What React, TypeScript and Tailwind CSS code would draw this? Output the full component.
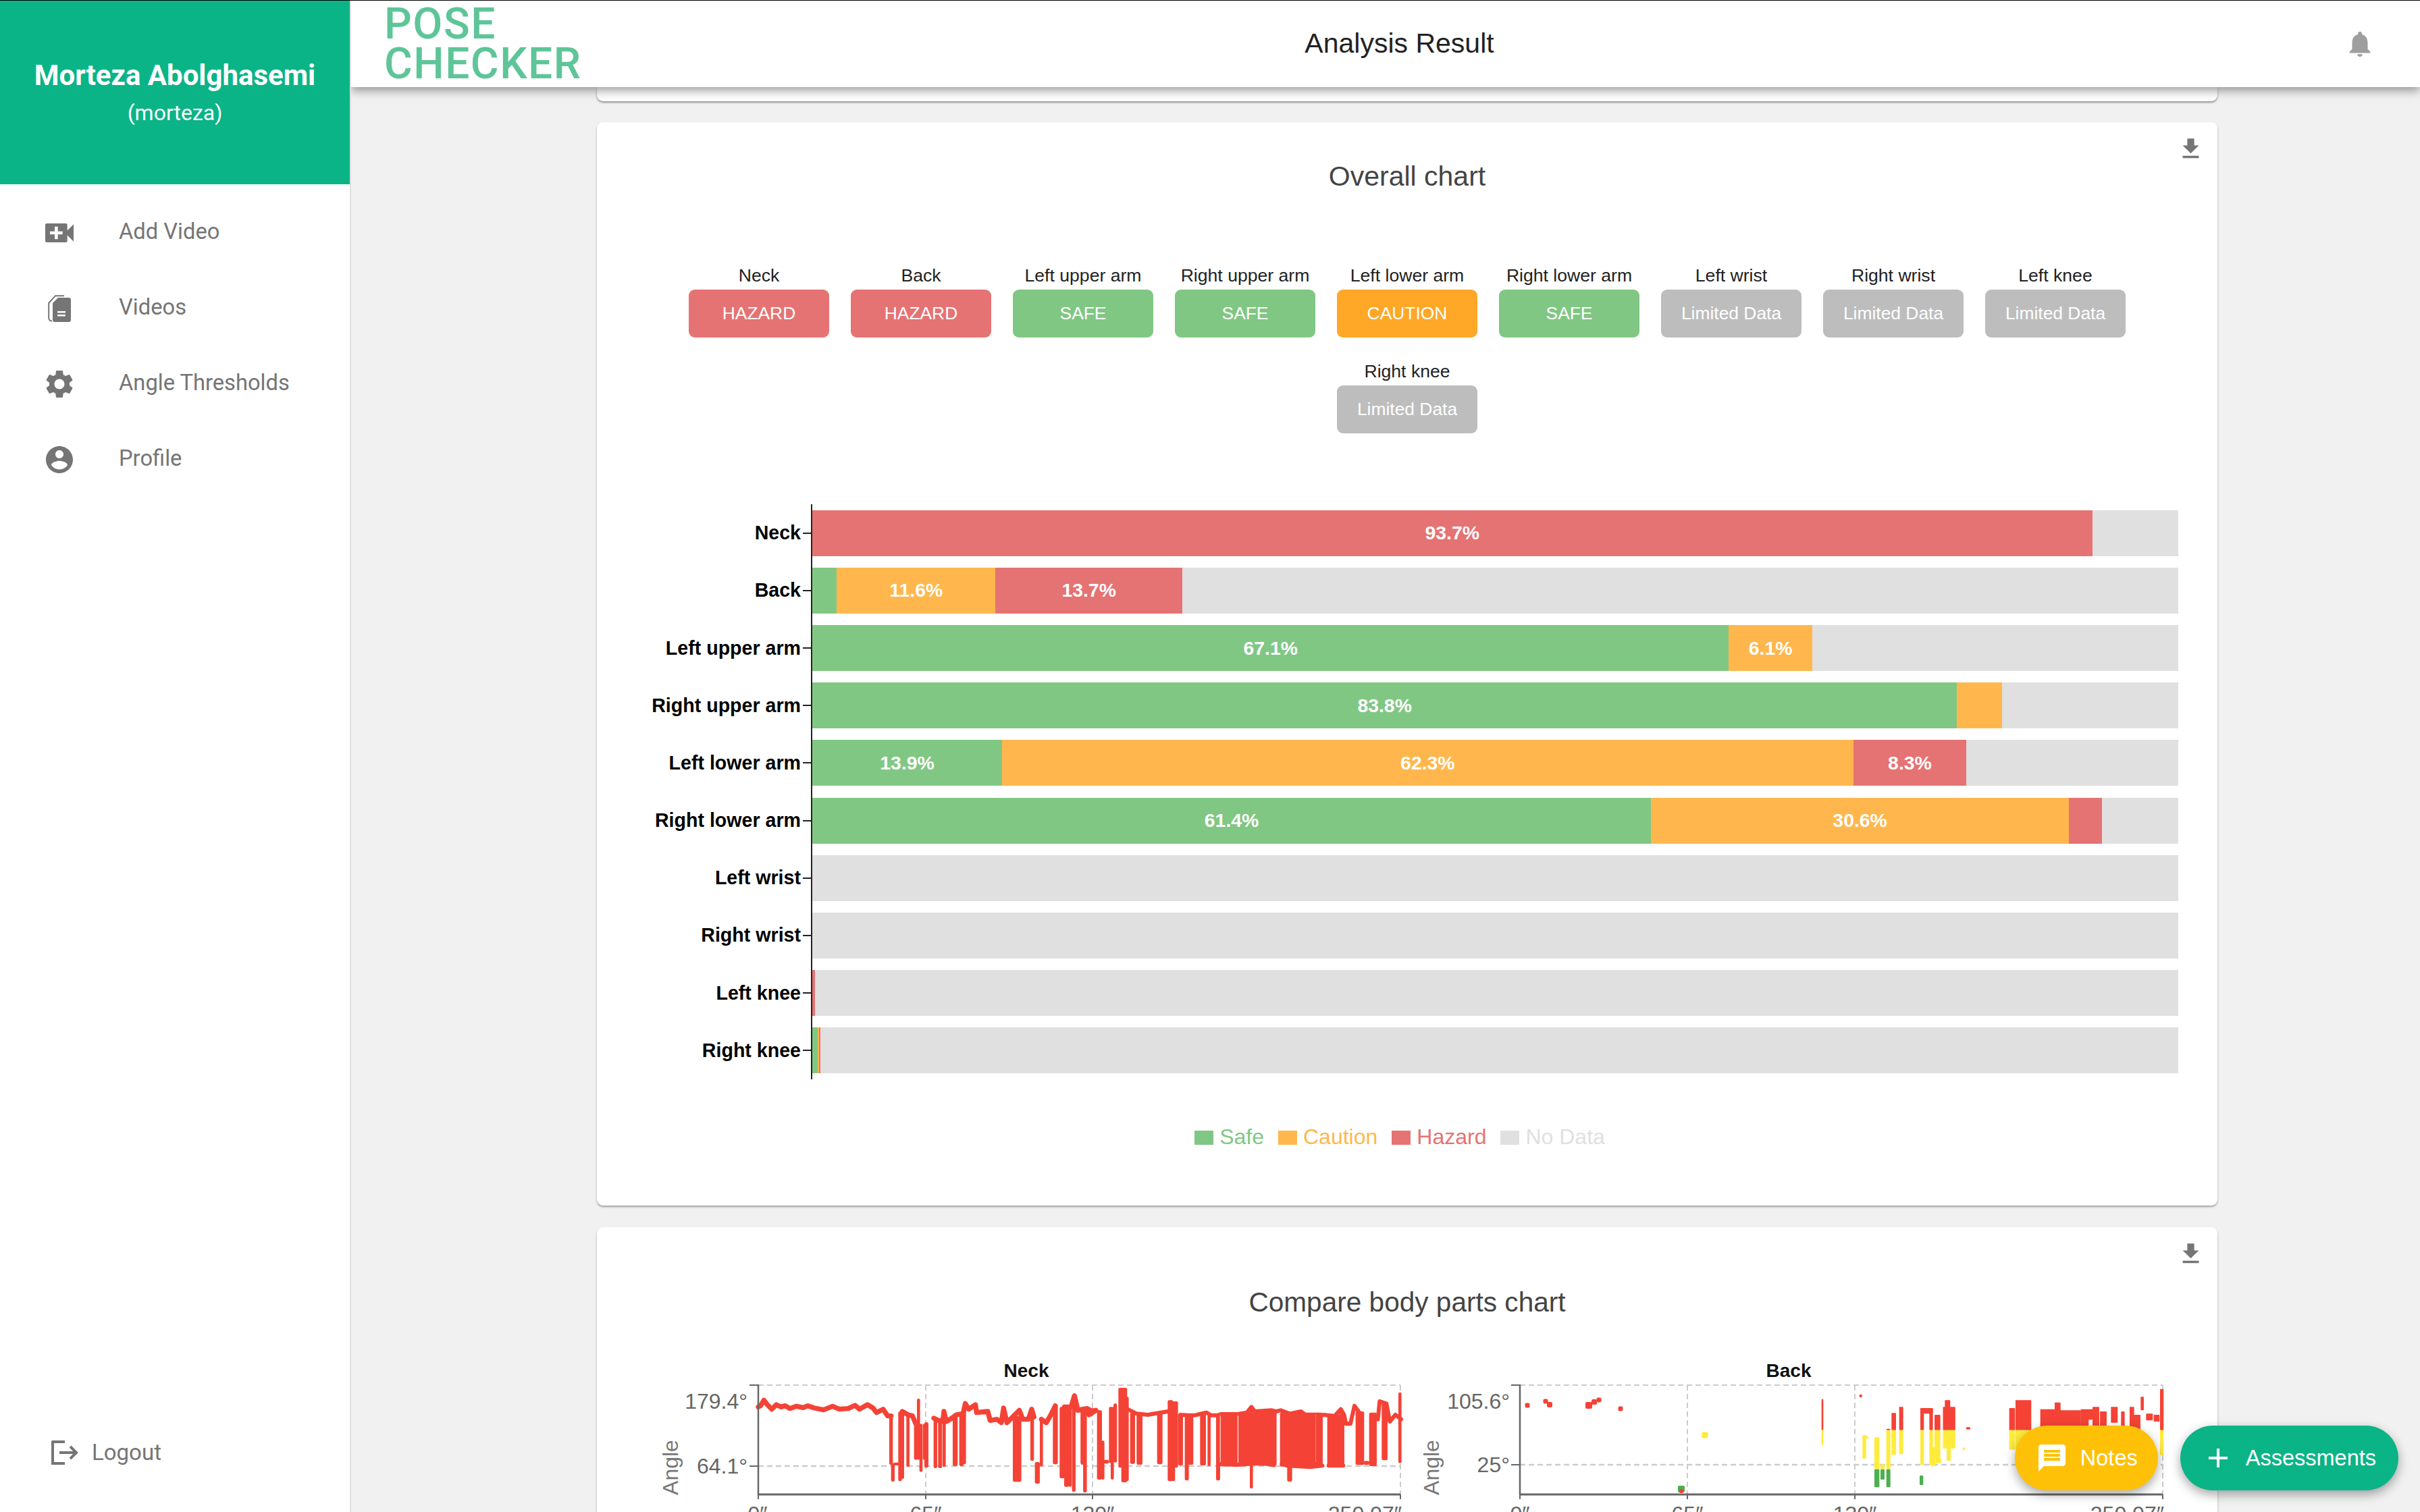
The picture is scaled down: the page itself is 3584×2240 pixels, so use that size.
import type { ReactNode } from "react";

type Seg = { pct: number; color: string; label?: string };

const SAFE = "#81c784";
const CAUTION = "#ffb74d";
const HAZARD = "#e57373";

const chips = [
  { name: "Neck", status: "HAZARD", cls: "bg-[#e57373]" },
  { name: "Back", status: "HAZARD", cls: "bg-[#e57373]" },
  { name: "Left upper arm", status: "SAFE", cls: "bg-[#81c784]" },
  { name: "Right upper arm", status: "SAFE", cls: "bg-[#81c784]" },
  { name: "Left lower arm", status: "CAUTION", cls: "bg-[#ffa726]" },
  { name: "Right lower arm", status: "SAFE", cls: "bg-[#81c784]" },
  { name: "Left wrist", status: "Limited Data", cls: "bg-[#bdbdbd]" },
  { name: "Right wrist", status: "Limited Data", cls: "bg-[#bdbdbd]" },
  { name: "Left knee", status: "Limited Data", cls: "bg-[#bdbdbd]" },
  { name: "Right knee", status: "Limited Data", cls: "bg-[#bdbdbd]" },
];

const bars: { name: string; segs: Seg[] }[] = [
  { name: "Neck", segs: [{ pct: 93.7, color: HAZARD, label: "93.7%" }] },
  {
    name: "Back",
    segs: [
      { pct: 1.8, color: SAFE },
      { pct: 11.6, color: CAUTION, label: "11.6%" },
      { pct: 13.7, color: HAZARD, label: "13.7%" },
    ],
  },
  {
    name: "Left upper arm",
    segs: [
      { pct: 67.1, color: SAFE, label: "67.1%" },
      { pct: 6.1, color: CAUTION, label: "6.1%" },
    ],
  },
  {
    name: "Right upper arm",
    segs: [
      { pct: 83.8, color: SAFE, label: "83.8%" },
      { pct: 3.3, color: CAUTION },
    ],
  },
  {
    name: "Left lower arm",
    segs: [
      { pct: 13.9, color: SAFE, label: "13.9%" },
      { pct: 62.3, color: CAUTION, label: "62.3%" },
      { pct: 8.3, color: HAZARD, label: "8.3%" },
    ],
  },
  {
    name: "Right lower arm",
    segs: [
      { pct: 61.4, color: SAFE, label: "61.4%" },
      { pct: 30.6, color: CAUTION, label: "30.6%" },
      { pct: 2.4, color: HAZARD },
    ],
  },
  { name: "Left wrist", segs: [] },
  { name: "Right wrist", segs: [] },
  { name: "Left knee", segs: [{ pct: 0.2, color: HAZARD }] },
  {
    name: "Right knee",
    segs: [
      { pct: 0.4, color: SAFE },
      { pct: 0.1, color: CAUTION },
      { pct: 0.1, color: HAZARD },
    ],
  },
];

// traced columns: x, top, bottom, width (in 3x crop units)
type Col = [number, number, number, number];

const neckA: Col[] = [
  [590, 150, 372, 16], [598, 365, 447, 16], [615, 362, 375, 30], [630, 135, 445, 16], [641, 135, 435, 14],
  [665, 150, 382, 14], [700, 190, 350, 16], [712, 78, 350, 14], [723, 190, 404, 14], [737, 190, 350, 12],
  [747, 183, 385, 18], [787, 162, 387, 16], [808, 170, 387, 18], [826, 135, 382, 14], [875, 150, 378, 22],
  [903, 150, 378, 20], [916, 100, 370, 14], [1150, 155, 448, 38], [1217, 125, 355, 16], [1240, 360, 456, 22],
  [1258, 170, 380, 14], [1320, 110, 370, 22], [1350, 115, 432, 22], [1370, 110, 470, 22], [1386, 110, 470, 14],
  [1402, 65, 492, 16], [1440, 125, 372, 14], [1452, 130, 495, 16],
];
const neckATrend =
  "M0,115 L10,110 25,85 40,105 60,125 80,105 100,115 120,110 140,122 170,112 200,118 220,110 250,120 290,128 330,112 360,125 400,122 430,108 450,125 485,105 510,120 525,140 555,125 575,155 590,155 M640,135 665,150 685,155 700,190 M780,165 800,175 M810,175 830,180 M820,180 825,135 835,180 860,165 880,150 910,145 920,100 935,125 965,105 970,140 1020,135 1030,175 1060,170 1080,185 1090,120 1105,185 1130,160 1160,130 1175,170 1200,170 1215,125 1225,160 M1258,170 1280,185 1300,150 1320,110 M1360,115 1390,115 1405,65 1420,130 1450,125 1470,150 1500,130";

const neckB: Col[] = [
  [10, 125, 370, 18], [20, 125, 495, 14], [85, 130, 438, 22], [100, 265, 438, 14], [115, 350, 367, 24],
  [135, 115, 365, 16], [142, 115, 438, 14], [155, 100, 362, 16], [180, 30, 385, 22], [195, 30, 450, 26],
  [208, 70, 445, 14], [232, 140, 368, 22], [263, 140, 372, 26], [353, 135, 370, 24], [400, 85, 445, 24],
  [414, 90, 445, 14], [425, 90, 385, 18], [445, 145, 375, 22], [473, 145, 442, 18], [490, 145, 372, 24],
  [545, 140, 375, 26], [572, 150, 378, 14], [612, 145, 442, 18], [661, 140, 375, 76], [737, 140, 372, 70],
  [760, 110, 478, 14], [820, 130, 372, 100], [860, 130, 376, 24], [982, 140, 380, 190], [930, 370, 447, 22],
  [1135, 150, 380, 76], [1157, 120, 170, 14], [1242, 135, 373, 38], [1272, 355, 373, 24], [1300, 140, 378, 34],
  [1352, 95, 352, 26], [1420, 50, 365, 14],
];
const neckBTrend =
  "M0,125 30,120 50,130 70,130 M210,125 250,145 300,150 330,145 390,135 M445,150 480,152 510,152 530,147 560,140 580,152 610,152 625,147 700,147 740,140 760,115 775,135 850,130 870,135 890,130 930,145 980,135 1000,150 1050,160 1080,150 1130,155 1157,125 1172,150 1180,190 1200,190 1218,110 1240,140 M1322,170 1330,90 1360,100 1375,180 1400,150 1425,170 M620,370 700,372 780,366 830,368 860,374 M895,368 920,376 1020,382 1075,376 M1103,376 1168,376";
// hairline gaps inside the dense blocks
const neckBGaps = [621, 700, 1046];

const backCols: Col[] = [
  [-3, 80, 285, 8], [167, 60, 72, 12], [183, 240, 345, 16], [195, 245, 255, 14], [239, 250, 472, 22],
  [264, 370, 438, 18], [290, 212, 472, 18], [314, 142, 328, 20], [347, 115, 325, 18], [440, 120, 372, 16],
  [437, 420, 462, 16], [460, 120, 145, 55], [480, 120, 375, 16], [490, 295, 378, 20], [505, 150, 345, 20],
  [516, 150, 362, 10], [513, 345, 365, 24], [560, 115, 300, 55], [553, 85, 125, 24], [558, 300, 355, 18],
  [645, 205, 215, 18], [625, 295, 308, 8], [840, 120, 305, 26], [890, 85, 305, 70], [1010, 125, 300, 90],
  [1042, 95, 300, 26], [1056, 130, 300, 14], [1100, 130, 300, 80], [1140, 130, 300, 10], [1162, 125, 300, 36],
  [1192, 125, 172, 30], [1212, 115, 300, 30], [1245, 135, 300, 30], [1294, 115, 185, 30], [1332, 135, 300, 16],
  [1372, 115, 300, 20], [1395, 150, 300, 30], [1418, 70, 130, 14], [1450, 145, 175, 30], [1482, 150, 180, 26],
  [1505, 35, 330, 16],
];
// extra specks left of the crop, real page px
const backSpecks: [number, number, number, string][] = [
  [2262, 2081, 7, "#f44336"], [2289, 2075, 7, "#f44336"], [2295, 2080, 8, "#f44336"], [2353, 2081, 10, "#f44336"],
  [2361, 2076, 8, "#f44336"], [2368, 2073, 7, "#f44336"], [2400, 2086, 7, "#f44336"], [2525, 2125, 9, "#ffeb3b"],
  [2490, 2205, 10, "#4caf50"], [2490, 2208, 6, "#f44336"],
];

function splitCol([x, top, bot, w]: Col) {
  const bands = [
    { from: -100, to: 218, color: "#f44336" },
    { from: 218, to: 392, color: "#ffeb3b" },
    { from: 392, to: 999, color: "#4caf50" },
  ];
  return bands
    .filter((b) => top < b.to && bot > b.from)
    .map((b) => ({
      x,
      w,
      y: Math.max(top, b.from),
      h: Math.min(bot, b.to) - Math.max(top, b.from),
      color: b.color,
    }));
}

function Columns({ cols, color }: { cols: Col[]; color: string }) {
  return (
    <>
      {cols.map(([x, top, bot, w], i) => (
        <rect key={i} x={x - w / 2} y={top} width={w} height={bot - top} rx={Math.min(w / 2, 7)} fill={color} />
      ))}
    </>
  );
}

function PlotFrame({
  left,
  right,
  grid,
  lowY,
  topLabel,
  lowLabel,
  labelRight,
  angleX,
  title,
  titleX,
  children,
  ticks,
}: {
  left: number;
  right: number;
  grid: number[];
  lowY: number;
  topLabel: string;
  lowLabel: string;
  labelRight: number;
  angleX: number;
  title: string;
  titleX: number;
  children: ReactNode;
  ticks: { x: number; text: string; anchor: "middle" | "end" }[];
}) {
  return (
    <>
      <text x={titleX} y={2039} textAnchor="middle" className="text-[28px] font-bold fill-[#111]">
        {title}
      </text>
      <line x1={left} x2={right} y1={2051} y2={2051} stroke="#ccc" strokeWidth={2} strokeDasharray="8 5" />
      <line x1={left} x2={right} y1={lowY} y2={lowY} stroke="#ccc" strokeWidth={2.5} strokeDasharray="8 5" />
      {grid.map((x) => (
        <line key={x} x1={x} x2={x} y1={2051} y2={2213} stroke="#ccc" strokeWidth={2} strokeDasharray="8 5" />
      ))}
      {children}
      <line x1={left} x2={left} y1={2050} y2={2214} stroke="#666" strokeWidth={2.5} />
      <line x1={left} x2={right} y1={2213} y2={2213} stroke="#666" strokeWidth={3} />
      <line x1={left - 13} x2={left} y1={2051} y2={2051} stroke="#666" strokeWidth={2} />
      <line x1={left - 13} x2={left} y1={lowY} y2={lowY} stroke="#666" strokeWidth={2} />
      {[left, ...grid].map((x) => (
        <line key={x} x1={x} x2={x} y1={2213} y2={2220} stroke="#666" strokeWidth={2} />
      ))}
      <text x={labelRight} y={2086} textAnchor="end" className="text-[32px] fill-[#666]">
        {topLabel}
      </text>
      <text x={labelRight} y={lowY + 11} textAnchor="end" className="text-[32px] fill-[#666]">
        {lowLabel}
      </text>
      <text
        x={angleX}
        y={2173}
        textAnchor="middle"
        transform={`rotate(-90 ${angleX} 2173)`}
        dominantBaseline="middle"
        className="text-[32px] fill-[#777]"
      >
        Angle
      </text>
      {ticks.map((t) => (
        <text key={t.text} x={t.x} y={2253} textAnchor={t.anchor} className="text-[32px] fill-[#666]">
          {t.text}
        </text>
      ))}
    </>
  );
}

function NeckChart() {
  return (
    <svg viewBox="960 2010 1130 260" className="w-[1130px] h-[260px] shrink-0">
      <PlotFrame
        left={1123}
        right={2074}
        grid={[1371, 1618, 2074]}
        lowY={2171}
        topLabel="179.4°"
        lowLabel="64.1°"
        labelRight={1107}
        angleX={996}
        title="Neck"
        titleX={1520}
        ticks={[
          { x: 1122, text: "0″", anchor: "middle" },
          { x: 1371, text: "65″", anchor: "middle" },
          { x: 1618, text: "130″", anchor: "middle" },
          { x: 2076, text: "250.07″", anchor: "end" },
        ]}
      >
        <g transform="translate(1123 2045) scale(0.3333)">
          <Columns cols={neckA} color="#f44336" />
          <path d={neckATrend} fill="none" stroke="#f44336" strokeWidth={22} strokeLinejoin="round" strokeLinecap="round" />
        </g>
        <g transform="translate(1600 2045) scale(0.3333)">
          <Columns cols={neckB} color="#f44336" />
          <path d={neckBTrend} fill="none" stroke="#f44336" strokeWidth={18} strokeLinejoin="round" strokeLinecap="round" />
          {neckBGaps.map((x) => (
            <line key={x} x1={x} x2={x} y1={150} y2={360} stroke="#fff" strokeWidth={2} opacity={0.6} />
          ))}
        </g>
      </PlotFrame>
    </svg>
  );
}

function BackChart() {
  return (
    <svg viewBox="2100 2010 1110 260" className="w-[1110px] h-[260px] shrink-0">
      <PlotFrame
        left={2251}
        right={3203}
        grid={[2499, 2747, 3203]}
        lowY={2169}
        topLabel="105.6°"
        lowLabel="25°"
        labelRight={2236}
        angleX={2123}
        title="Back"
        titleX={2649}
        ticks={[
          { x: 2251, text: "0″", anchor: "middle" },
          { x: 2499, text: "65″", anchor: "middle" },
          { x: 2747, text: "130″", anchor: "middle" },
          { x: 3205, text: "250.07″", anchor: "end" },
        ]}
      >
        {backSpecks.map(([x, y, size, color], i) => (
          <rect key={i} x={x - size / 2} y={y - size / 2} width={size} height={size} rx={2} fill={color} />
        ))}
        <g transform="translate(2700 2045) scale(0.3333)">
          {backCols.flatMap(splitCol).map((p, i) => (
            <rect key={i} x={p.x - p.w / 2} y={p.y} width={p.w} height={p.h} rx={3} fill={p.color} />
          ))}
        </g>
      </PlotFrame>
    </svg>
  );
}

function DownloadButton() {
  return (
    <svg viewBox="0 0 24 24" className="absolute right-[19px] top-[19px] w-[41px] h-[41px] fill-[#757575]">
      <path d="M19 9h-4V3H9v6H5l7 7 7-7zM5 18v2h14v-2H5z" />
    </svg>
  );
}

function StatusChips() {
  return (
    <div className="mx-auto mt-[106px] flex w-[2200px] flex-wrap justify-center">
      {chips.map((chip) => (
        <div key={chip.name} className="flex h-[142px] w-[240px] flex-col items-center">
          <div className="flex h-[38px] items-center pb-[3px] text-[26.6px] text-[#222]">{chip.name}</div>
          <div className={`flex h-[71px] w-[208px] items-center justify-center rounded-[9px] text-[26.4px] text-white ${chip.cls}`}>
            {chip.status}
          </div>
        </div>
      ))}
    </div>
  );
}

function OverallBars() {
  return (
    <div className="mt-[72px] flex flex-col">
      {bars.map((bar) => (
        <div key={bar.name} className="flex h-[85.2px] items-center">
          <div className="w-[302px] text-right text-[28.6px] font-bold text-black">{bar.name}</div>
          <div className="ml-[3px] h-[2px] w-[12px] bg-[#222]" />
          <div className="flex h-full items-center border-l-2 border-[#222]">
            <div className="flex h-[68px] w-[2023px] bg-[#e0e0e0]">
              {bar.segs.map((seg, i) => (
                <div
                  key={i}
                  className="flex h-full items-center justify-center text-[28.4px] font-bold text-white"
                  style={{ width: `${seg.pct}%`, backgroundColor: seg.color }}
                >
                  {seg.label}
                </div>
              ))}
            </div>
          </div>
        </div>
      ))}
    </div>
  );
}

function Legend() {
  const items = [
    { text: "Safe", box: "bg-[#81c784]", label: "text-[#81c784]" },
    { text: "Caution", box: "bg-[#ffb74d]", label: "text-[#ffb74d]" },
    { text: "Hazard", box: "bg-[#e57373]", label: "text-[#e57373]" },
    { text: "No Data", box: "bg-[#e0e0e0]", label: "text-[#e0e0e0]" },
  ];
  return (
    <div className="mt-[65px] flex h-[40px] items-center justify-center gap-[21px] pr-[22px]">
      {items.map((item) => (
        <div key={item.text} className="flex items-center gap-[9px]">
          <span className={`h-[21px] w-[28px] translate-y-[2px] ${item.box}`} />
          <span className={`text-[32px] ${item.label}`}>{item.text}</span>
        </div>
      ))}
    </div>
  );
}

function Sidebar() {
  const nav = [
    {
      name: "Add Video",
      icon: (
        <svg viewBox="0 0 24 24" className="h-[58px] w-[58px] fill-[#757575]">
          <path d="M17 10.5V7c0-.55-.45-1-1-1H4c-.55 0-1 .45-1 1v10c0 .55.45 1 1 1h12c.55 0 1-.45 1-1v-3.5l4 4v-11l-4 4zM14 13h-3v3H9v-3H6v-2h3V8h2v3h3v2z" />
        </svg>
      ),
    },
    {
      name: "Videos",
      icon: (
        <svg viewBox="0 0 34 40" className="h-[40px] w-[34px]">
          <path d="M6 38.5C3 38.5 1.2 36.5 1.2 34V12L11 1.2H24" fill="none" stroke="#757575" strokeWidth={2} />
          <path d="M15 4h16c1.7 0 3 1.3 3 3v30c0 1.7-1.3 3-3 3H10c-1.7 0-3-1.3-3-3V12z" fill="#757575" />
          <path d="M14 24h12v2.5H14zM14 29h12v2.5H14z" fill="#fff" />
        </svg>
      ),
    },
    {
      name: "Angle Thresholds",
      icon: (
        <svg viewBox="0 0 24 24" className="h-[50px] w-[50px] fill-[#757575]">
          <path d="M19.14 12.94c.04-.3.06-.61.06-.94 0-.32-.02-.64-.07-.94l2.03-1.58c.18-.14.23-.41.12-.61l-1.92-3.32c-.12-.22-.37-.29-.59-.22l-2.39.96c-.5-.38-1.03-.7-1.62-.94l-.36-2.54c-.04-.24-.24-.41-.48-.41h-3.84c-.24 0-.43.17-.47.41l-.36 2.54c-.59.24-1.13.57-1.62.94l-2.39-.96c-.22-.08-.47 0-.59.22L2.74 8.87c-.12.21-.08.47.12.61l2.03 1.58c-.05.3-.09.63-.09.94s.02.64.07.94l-2.03 1.58c-.18.14-.23.41-.12.61l1.92 3.32c.12.22.37.29.59.22l2.39-.96c.5.38 1.03.7 1.62.94l.36 2.54c.05.24.24.41.48.41h3.84c.24 0 .44-.17.47-.41l.36-2.54c.59-.24 1.13-.56 1.62-.94l2.39.96c.22.08.47 0 .59-.22l1.92-3.32c.12-.22.07-.47-.12-.61l-2.01-1.58zM12 15.6c-1.98 0-3.6-1.62-3.6-3.6s1.62-3.6 3.6-3.6 3.6 1.62 3.6 3.6-1.62 3.6-3.6 3.6z" />
        </svg>
      ),
    },
    {
      name: "Profile",
      icon: (
        <svg viewBox="0 0 24 24" className="h-[48px] w-[48px] fill-[#757575]">
          <path d="M12 2C6.48 2 2 6.48 2 12s4.48 10 10 10 10-4.48 10-10S17.52 2 12 2zm0 3c1.66 0 3 1.34 3 3s-1.34 3-3 3-3-1.34-3-3 1.34-3 3-3zm0 14.2c-2.5 0-4.71-1.28-6-3.22.03-1.99 4-3.08 6-3.08 1.99 0 5.97 1.09 6 3.08-1.29 1.94-3.5 3.22-6 3.22z" />
        </svg>
      ),
    },
  ];

  return (
    <aside className="flex h-full w-[520px] shrink-0 flex-col border-r-2 border-[#dedede] bg-white font-['Roboto',sans-serif]">
      <div className="h-[272px] bg-[#0bb487] pt-[87px] text-center text-white">
        <div className="h-[48px] text-[42px] font-bold leading-[48px]">Morteza Abolghasemi</div>
        <div className="mt-[11px] h-[40px] text-[32px] leading-[40px]">(morteza)</div>
      </div>
      <nav className="pt-[16px]">
        {nav.map((item) => (
          <div key={item.name} className="flex h-[112px] items-center pl-[60px]">
            <div className="flex w-[56px] items-center justify-center">{item.icon}</div>
            <span className="mb-[3px] ml-[60px] text-[32.7px] text-[#757575]">{item.name}</span>
          </div>
        ))}
      </nav>
      <div className="mb-[52px] mt-auto flex h-[72px] items-center pl-[76px]">
        <svg viewBox="0 0 40 36" className="h-[36px] w-[40px]">
          <path d="M20 2H5a3 3 0 0 0-3 0v32h18" fill="none" stroke="#757575" strokeWidth={4} />
          <path d="M12 18H37M28 9l9 9-9 9" fill="none" stroke="#757575" strokeWidth={4} />
        </svg>
        <span className="ml-[20px] text-[33px] text-[#757575]">Logout</span>
      </div>
    </aside>
  );
}

function TopBar() {
  return (
    <header className="relative z-10 flex h-[128px] shrink-0 items-center bg-white pl-[49px] pr-[66px] shadow-[0_5px_14px_rgba(0,0,0,0.4)]">
      <div className="w-[291px] font-['Roboto',sans-serif] text-[64px] font-medium leading-[59px] tracking-[1.5px] text-[#5ec598]">
        POSE
        <br />
        CHECKER
      </div>
      <div className="flex-1 pr-[187px] text-center text-[41px] text-[#222]">Analysis Result</div>
      <svg viewBox="0 0 24 24" className="h-[46px] w-[46px] fill-[#9e9e9e]">
        <path d="M12 22c1.1 0 2-.9 2-2h-4c0 1.1.89 2 2 2zm6-6v-5c0-3.07-1.64-5.64-4.5-6.32V4c0-.83-.67-1.5-1.5-1.5s-1.5.67-1.5 1.5v.68C7.63 5.36 6 7.92 6 11v5l-2 2v1h16v-1l-2-2z" />
      </svg>
    </header>
  );
}

function FloatingButtons() {
  return (
    <div className="absolute bottom-[32px] right-[32px] z-20 flex gap-[33px] text-[32.5px] text-white">
      <div className="flex h-[96px] items-center gap-[18px] rounded-full bg-[#ffc107] pl-[31px] pr-[30px] shadow-[0_6px_16px_rgba(0,0,0,0.35)]">
        <svg viewBox="0 0 24 24" className="h-[48px] w-[48px] fill-white">
          <path d="M20 2H4c-1.1 0-1.99.9-1.99 2L2 22l4-4h14c1.1 0 2-.9 2-2V4c0-1.1-.9-2-2-2zM6 9h12v2H6V9zm0 3h12v2H6v-2zm12-4H6V6h12v2z" />
        </svg>
        Notes
      </div>
      <div className="flex h-[96px] items-center gap-[17px] rounded-full bg-[#0bb487] pl-[32px] pr-[33px] shadow-[0_6px_16px_rgba(0,0,0,0.35)]">
        <svg viewBox="0 0 24 24" className="h-[48px] w-[48px] fill-white">
          <path d="M19 13h-6v6h-2v-6H5v-2h6V5h2v6h6v2z" />
        </svg>
        Assessments
      </div>
    </div>
  );
}

export default function App() {
  return (
    <div className="relative h-[2240px] w-[3584px] overflow-hidden bg-[#f1f1f1] font-['Liberation_Sans',sans-serif]">
      <div className="h-px w-full bg-black" />
      <div className="flex h-[2239px]">
        <Sidebar />
        <main className="flex min-w-0 flex-1 flex-col overflow-hidden">
          <TopBar />
          <div className="ml-[364px] w-[2400px]">
            <div className="h-[21px] rounded-b-[9px] bg-white shadow-[0_2px_3px_rgba(0,0,0,0.4)]" />
            <section className="relative mt-[31px] h-[1605px] rounded-[9px] bg-white pt-[56px] shadow-[0_2px_3px_rgba(0,0,0,0.35)]">
              <DownloadButton />
              <h2 className="h-[48px] text-center text-[41px] font-normal leading-[48px] text-[#444]">Overall chart</h2>
              <StatusChips />
              <OverallBars />
              <Legend />
            </section>
            <section className="relative mt-[32px] h-[500px] rounded-[9px] bg-white pt-[87px] shadow-[0_2px_3px_rgba(0,0,0,0.35)]">
              <DownloadButton />
              <h2 className="h-[48px] text-center text-[40.6px] font-normal leading-[48px] text-[#444]">Compare body parts chart</h2>
              <div className="ml-[76px] mt-[58px] flex gap-[10px]">
                <NeckChart />
                <BackChart />
              </div>
            </section>
          </div>
        </main>
      </div>
      <FloatingButtons />
    </div>
  );
}
